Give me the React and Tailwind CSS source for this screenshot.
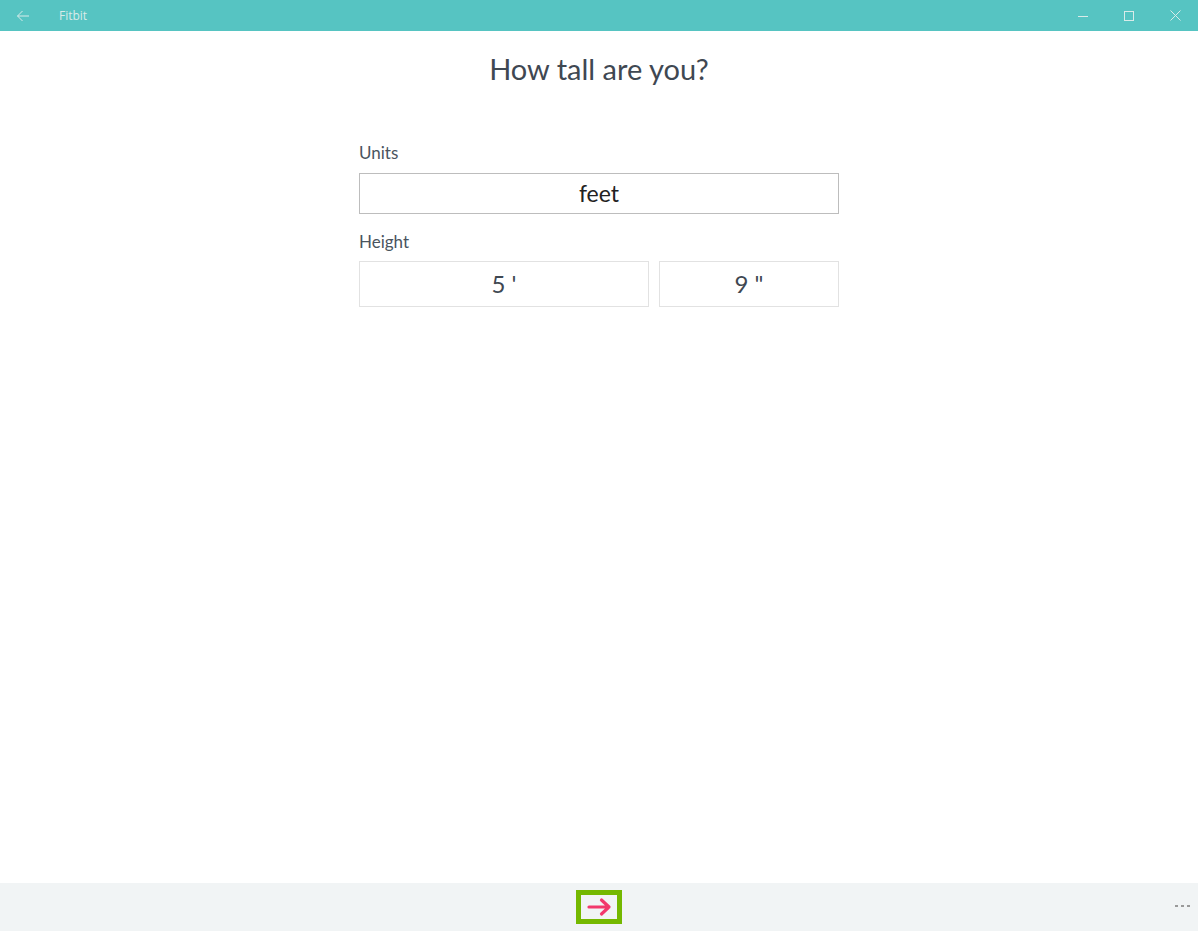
import React from "react";

export default function App() {
  return (
    <div className="w-[1198px] h-[931px] flex flex-col bg-white overflow-hidden" style={{ fontFamily: "Lato, 'Open Sans', sans-serif" }}>
      {/* Title bar */}
      <div className="h-[31px] bg-[#56c4c2] flex items-center shrink-0">
        <div className="w-[46px] h-full flex items-center justify-center">
          <svg width="16" height="16" viewBox="0 0 16 16" fill="none" stroke="#d7ecea" strokeWidth="1">
            <path d="M14 8H2.5M7.5 3L2.5 8l5 5" />
          </svg>
        </div>
        <div className="ml-[13px] text-[12px] text-[#d9ebe9]" style={{ fontFamily: "'Open Sans', sans-serif" }}>Fitbit</div>
        <div className="ml-auto flex h-full">
          <div className="w-[46px] h-full flex items-center justify-center">
            <svg width="10" height="10" viewBox="0 0 10 10"><path d="M0 5.5h10" stroke="#d9ebe9" strokeWidth="1" /></svg>
          </div>
          <div className="w-[46px] h-full flex items-center justify-center">
            <svg width="10" height="10" viewBox="0 0 10 10"><rect x="0.5" y="0.5" width="9" height="9" fill="none" stroke="#d9ebe9" strokeWidth="1" /></svg>
          </div>
          <div className="w-[46px] h-full flex items-center justify-center">
            <svg width="11" height="11" viewBox="0 0 11 11"><path d="M0.5 0.5l10 10M10.5 0.5l-10 10" stroke="#d9ebe9" strokeWidth="1" /></svg>
          </div>
        </div>
      </div>

      {/* Content */}
      <div className="flex-1 flex flex-col items-center">
        <h1 className="mt-[20px] text-[29px] leading-[36px] text-[#3f4852] font-normal">How tall are you?</h1>
        <div className="w-[480px] mt-[56px] flex flex-col">
          <div className="text-[17px] leading-[20px] text-[#4a545e]">Units</div>
          <div className="mt-[10px] h-[41px] border border-[#bdbdbd] flex items-center justify-center text-[23px] text-[#222]">feet</div>
          <div className="mt-[18px] text-[17px] leading-[20px] text-[#4a545e]">Height</div>
          <div className="mt-[9px] flex gap-[10px]">
            <div className="w-[290px] h-[46px] border border-[#e2e2e2] flex items-center justify-center text-[24px] text-[#3f4852]">5 '</div>
            <div className="w-[180px] h-[46px] border border-[#e2e2e2] flex items-center justify-center text-[24px] text-[#3f4852]">9 "</div>
          </div>
        </div>
      </div>

      {/* Bottom bar */}
      <div className="h-[48px] bg-[#f1f4f5] shrink-0 relative flex items-center justify-center">
        <div className="w-[46px] h-[34px] border-[5px] border-[#74b800] flex items-center justify-center">
          <svg width="26" height="20" viewBox="0 0 26 20" fill="none" stroke="#f2386c" strokeWidth="3.2" strokeLinecap="round" strokeLinejoin="round">
            <path d="M3 10h20M15.5 3l7.5 7-7.5 7" />
          </svg>
        </div>
        <div className="absolute right-[8px] top-[22px] flex gap-[3px]">
          <div className="w-[3px] h-[2px] bg-[#9a9a9a]" />
          <div className="w-[3px] h-[2px] bg-[#9a9a9a]" />
          <div className="w-[3px] h-[2px] bg-[#9a9a9a]" />
        </div>
      </div>
    </div>
  );
}
